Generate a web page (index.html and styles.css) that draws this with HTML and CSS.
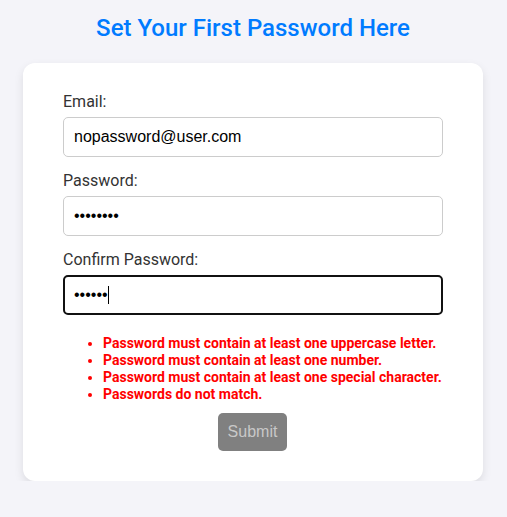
FILE: index.html
```html
<!DOCTYPE html>
<html>
<head>
<meta charset="utf-8">
<link rel="stylesheet" href="styles.css">
</head>
<body>
<div class="page">
  <h1 class="title">Set Your First Password Here</h1>
  <form class="card">
    <label class="label" for="email">Email:</label>
    <input class="field" id="email" type="email" value="nopassword@user.com">
    <label class="label" for="pw">Password:</label>
    <input class="field" id="pw" type="password" value="abcdefgh">
    <label class="label" for="cpw">Confirm Password:</label>
    <div class="field field-focus" id="cpw"><span class="dots">••••••</span><span class="caret"></span></div>
    <ul class="errors">
      <li>Password must contain at least one uppercase letter.</li>
      <li>Password must contain at least one number.</li>
      <li>Password must contain at least one special character.</li>
      <li>Passwords do not match.</li>
    </ul>
    <div class="actions">
      <button class="submit" type="button" disabled>Submit</button>
    </div>
  </form>
</div>
</body>
</html>
```

FILE: styles.css
```css
* { box-sizing: border-box; }
html, body { margin: 0; padding: 0; }
body {
  background: #f4f4f9;
  font-family: Roboto, "Liberation Sans", sans-serif;
}
.page {
  display: flex;
  flex-direction: column;
  align-items: center;
  padding: 14px 24px 0 23px;
}
.title {
  margin: 0 0 20px;
  font-size: 24px;
  font-weight: 500;
  line-height: 29px;
  color: #007bff;
}
.card {
  width: 460px;
  background: #fff;
  border-radius: 12px;
  box-shadow: 0 4px 10px rgba(0, 0, 0, 0.1);
  padding: 29px 40px 30px;
  display: flex;
  flex-direction: column;
}
.label {
  display: block;
  font-size: 16px;
  line-height: 19px;
  color: #333;
  margin-bottom: 6px;
}
.field {
  display: flex;
  align-items: center;
  width: 100%;
  height: 40px;
  border: 1px solid #ccc;
  border-radius: 5px;
  padding: 0 10px;
  font-family: "Liberation Sans", Arial, sans-serif;
  font-size: 16px;
  color: #000;
  background: #fff;
  margin: 0 0 14px;
  outline: none;
}
.field-focus {
  border: 2px solid #111;
  padding: 0 9px;
  margin-bottom: 0;
}
.dots { line-height: 18px; }
.caret {
  display: inline-block;
  width: 1px;
  height: 18px;
  background: #000;
}
.errors {
  margin: 20px 0 10px;
  padding-left: 40px;
  color: #f00;
  font-size: 14px;
  font-weight: 700;
  line-height: 17px;
}
.actions {
  display: flex;
  justify-content: center;
  padding-right: 1px;
}
.submit {
  background: #808080;
  color: #c8c8c8;
  border: none;
  border-radius: 5px;
  font-family: "Liberation Sans", Arial, sans-serif;
  font-size: 16px;
  line-height: 18px;
  padding: 10px 8px;
  width: 69px;
}
```
